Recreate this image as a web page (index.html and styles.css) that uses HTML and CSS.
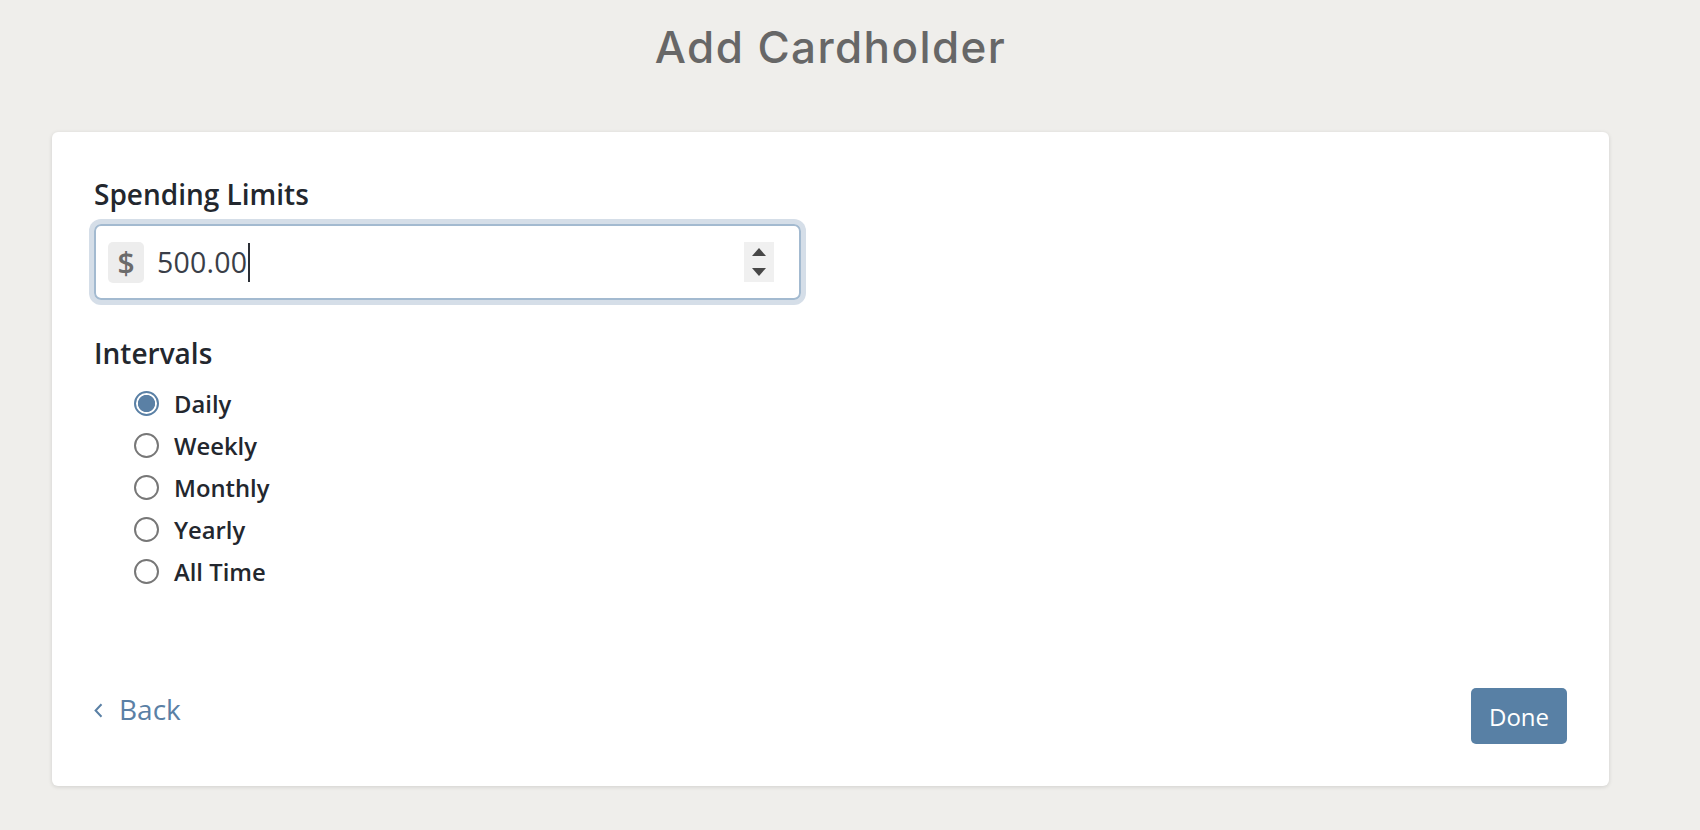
FILE: index.html
```html
<!DOCTYPE html>
<html lang="en">
<head>
<meta charset="utf-8">
<title>Add Cardholder</title>
<link rel="stylesheet" href="styles.css">
</head>
<body>
<div class="page">
  <h1 class="title">Add Cardholder</h1>
  <div class="card">
    <div class="field-label">Spending Limits</div>
    <div class="amount-input">
      <span class="addon">$</span>
      <span class="value">500.00</span><span class="caret"></span>
      <span class="spinner">
        <span class="tri up"></span>
        <span class="tri down"></span>
      </span>
    </div>

    <div class="field-label intervals-label">Intervals</div>
    <ul class="radio-list">
      <li class="radio-row"><span class="radio checked"></span><span class="radio-text">Daily</span></li>
      <li class="radio-row"><span class="radio"></span><span class="radio-text">Weekly</span></li>
      <li class="radio-row"><span class="radio"></span><span class="radio-text">Monthly</span></li>
      <li class="radio-row"><span class="radio"></span><span class="radio-text">Yearly</span></li>
      <li class="radio-row"><span class="radio"></span><span class="radio-text">All Time</span></li>
    </ul>

    <div class="footer">
      <a class="back" href="#">
        <svg class="chev" width="9" height="15" viewBox="0 0 9 15"><path d="M7.5 1.2 L1.6 7.5 L7.5 13.8" fill="none" stroke="#5a80a5" stroke-width="2"/></svg>
        <span>Back</span>
      </a>
      <button class="done">Done</button>
    </div>
  </div>
</div>
</body>
</html>
```

FILE: styles.css
```css
html, body {
  margin: 0;
  padding: 0;
}
body {
  background: #efeeeb;
  font-family: "Open Sans", "Noto Sans", sans-serif;
  color: #23272e;
  width: 1700px;
  height: 830px;
  overflow: hidden;
}
.page {
  width: 1557px;
  margin-left: 52px;
}
.title {
  margin: 21px 0 0 0;
  height: 52px;
  line-height: 52px;
  text-align: center;
  font-family: Inter, "Noto Sans", sans-serif;
  font-weight: 500;
  font-size: 44px;
  color: #676767;
  letter-spacing: 1.4px;
}
.card {
  margin-top: 59px;
  background: #fff;
  border-radius: 6px;
  box-shadow: 0 1px 4px rgba(0,0,0,0.13);
  padding: 44px 42px 42px 42px;
  box-sizing: border-box;
  height: 654px;
  display: flex;
  flex-direction: column;
}
.field-label {
  font-size: 28px;
  font-weight: 600;
  line-height: 36px;
  height: 36px;
  color: #23272e;
  margin-bottom: 12px;
}
.amount-input {
  width: 707px;
  height: 76px;
  box-sizing: border-box;
  border: 2px solid #a3bad0;
  border-radius: 7px;
  box-shadow: 0 0 0 5px #d5dee8;
  display: flex;
  align-items: center;
  padding: 0 25px 0 12px;
}
.addon {
  width: 36px;
  height: 41px;
  background: #ededed;
  border-radius: 5px;
  display: flex;
  align-items: center;
  justify-content: center;
  font-size: 30px;
  font-weight: 600;
  color: #6b6b6b;
}
.value {
  margin-left: 13px;
  font-size: 28.5px;
  color: #3a3e48;
  letter-spacing: 0.2px;
}
.caret {
  width: 2px;
  height: 39px;
  background: #2b2f36;
  margin-left: 1px;
}
.spinner {
  margin-left: auto;
  width: 30px;
  height: 40px;
  background: #f0f0f0;
  display: flex;
  flex-direction: column;
  align-items: center;
  justify-content: center;
  gap: 12px;
}
.tri {
  width: 0;
  height: 0;
  border-left: 7px solid transparent;
  border-right: 7px solid transparent;
}
.tri.up {
  border-bottom: 8px solid #474747;
}
.tri.down {
  border-top: 8px solid #474747;
}
.intervals-label {
  margin-top: 35px;
  margin-bottom: 11px;
}
.radio-list {
  list-style: none;
  margin: 0;
  padding: 0 0 0 40px;
}
.radio-row {
  height: 42px;
  display: flex;
  align-items: center;
}
.radio {
  width: 25px;
  height: 25px;
  box-sizing: border-box;
  border: 2px solid #777;
  border-radius: 50%;
  background: #fff;
  flex: none;
}
.radio.checked {
  border-color: #5a80a5;
  background: radial-gradient(circle, #5a80a5 0, #5a80a5 8.2px, #fff 9px);
}
.radio-text {
  margin-left: 15px;
  font-size: 23.8px;
  font-weight: 600;
  color: #23272e;
  position: relative;
  top: 1px;
}
.footer {
  margin-top: auto;
  display: flex;
  justify-content: space-between;
  align-items: flex-start;
}
.back {
  margin-top: 3px;
  display: flex;
  align-items: center;
  text-decoration: none;
  color: #5a80a5;
  font-size: 28px;
  line-height: 36px;
  gap: 16px;
}
.chev {
  margin-top: 3px;
  display: block;
}
.done {
  width: 96px;
  height: 56px;
  border: none;
  border-radius: 5px;
  background: #5880a5;
  color: #fff;
  font-family: "Open Sans", "Noto Sans", sans-serif;
  font-size: 24px;
  padding: 0;
  cursor: pointer;
}
```
